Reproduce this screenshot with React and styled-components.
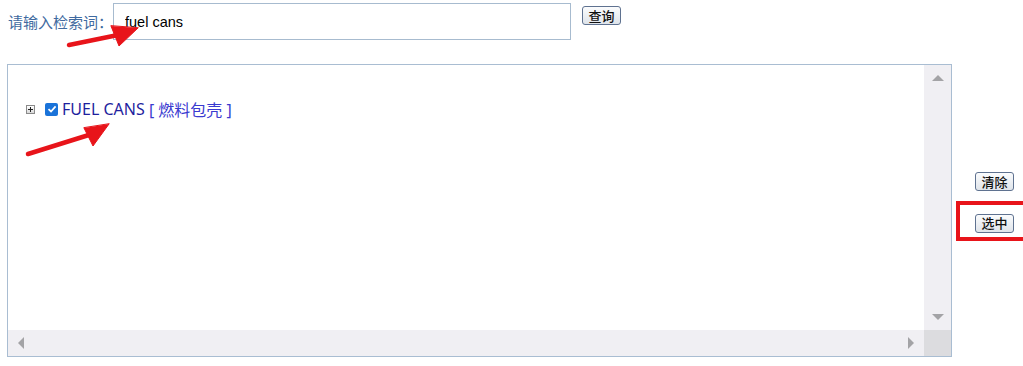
import React from "react";
import styled, { createGlobalStyle } from "styled-components";

const GlobalStyle = createGlobalStyle`
  html, body {
    margin: 0;
    padding: 0;
    background: #fff;
    overflow: hidden;
  }
  body {
    font-family: "Noto Sans", "Noto Sans CJK SC", sans-serif;
  }
`;

const Page = styled.div`
  position: relative;
  width: 1023px;
  height: 366px;
  padding-left: 7px;
  box-sizing: border-box;
  overflow: hidden;
`;

const SearchRow = styled.div`
  display: flex;
  align-items: flex-start;
  padding-top: 3px;
`;

const Label = styled.span`
  margin-left: 1px;
  width: 105px;
  flex-shrink: 0;
  line-height: 37px;
  font-size: 15px;
  color: #3f6aa0;
  font-family: "Noto Sans CJK SC", sans-serif;
  white-space: nowrap;
`;

const SearchInput = styled.input`
  box-sizing: border-box;
  width: 458px;
  height: 37px;
  border: 1px solid #a7bbcf;
  padding: 0 11px;
  font-size: 14.5px;
  font-family: "Liberation Sans", Arial, sans-serif;
  color: #000;
  outline: none;
`;

const SmallButton = styled.button`
  box-sizing: border-box;
  flex-shrink: 0;
  height: 19px;
  width: 39px;
  margin: ${(p) => p.$margin || "0"};
  padding: 0;
  border: 1px solid #5f7290;
  border-radius: 3px;
  background: linear-gradient(#fbfcfd, #dfe4ea);
  font-size: 13px;
  line-height: 16px;
  font-weight: 500;
  color: #111;
  font-family: "Noto Sans CJK SC", sans-serif;
`;

const MainRow = styled.div`
  display: flex;
  margin-top: 24px;
`;

const Panel = styled.div`
  box-sizing: border-box;
  flex-shrink: 0;
  width: 945px;
  height: 293px;
  border: 1px solid #a9bdd2;
  display: grid;
  grid-template-columns: 1fr 27px;
  grid-template-rows: 1fr 26px;
`;

const TreeArea = styled.div`
  padding: 34px 18px;
`;

const TreeRow = styled.div`
  display: flex;
  align-items: center;
  height: 20px;
`;

const Expander = styled.span`
  box-sizing: border-box;
  width: 9px;
  height: 9px;
  border: 1px solid #8a8a8a;
  background: linear-gradient(#fff, #d8d8d8);
  position: relative;
  margin-right: 10px;
  &::before,
  &::after {
    content: "";
    position: absolute;
    background: #222;
  }
  &::before {
    left: 1px;
    right: 1px;
    top: 3px;
    height: 1px;
  }
  &::after {
    top: 1px;
    bottom: 1px;
    left: 3px;
    width: 1px;
  }
`;

const Check = styled.span`
  box-sizing: border-box;
  width: 13px;
  height: 13px;
  border-radius: 2px;
  background: #1a73d9;
  display: inline-flex;
  align-items: center;
  justify-content: center;
  margin-right: 4px;
`;

const NodeName = styled.span`
  font-size: 16px;
  color: #1f1f9e;
  font-family: "Noto Sans", "Noto Sans CJK SC", sans-serif;
  white-space: pre;
`;

const NodeCode = styled.span`
  font-size: 16px;
  color: #3a3ad0;
  font-family: "Noto Sans", "Noto Sans CJK SC", sans-serif;
  white-space: pre;
`;

const ScrollTrack = styled.div`
  background: #f0eff3;
  display: flex;
  flex-direction: ${(p) => (p.$vertical ? "column" : "row")};
  justify-content: space-between;
  align-items: center;
  padding: ${(p) => (p.$vertical ? "10px 0" : "0 10px")};
`;

const Corner = styled.div`
  background: #dcdcdf;
`;

const Arrow = styled.span`
  width: 0;
  height: 0;
  border-style: solid;
  border-color: transparent;
  ${(p) =>
    p.$dir === "up" &&
    "border-width: 0 6px 6px 6px; border-bottom-color: #a3a3a6;"}
  ${(p) =>
    p.$dir === "down" &&
    "border-width: 6px 6px 0 6px; border-top-color: #a3a3a6;"}
  ${(p) =>
    p.$dir === "left" &&
    "border-width: 6px 6px 6px 0; border-right-color: #a3a3a6;"}
  ${(p) =>
    p.$dir === "right" &&
    "border-width: 6px 0 6px 6px; border-left-color: #a3a3a6;"}
`;

const SideColumn = styled.div`
  display: flex;
  flex-direction: column;
  align-items: flex-start;
  flex-shrink: 0;
  padding-top: 108px;
  margin-left: 4px;
`;

const Highlight = styled.div`
  margin-top: 10px;
  width: 72px;
  height: 40px;
  box-sizing: border-box;
  border: 4px solid #e8141a;
  padding: 6px 0 0 15px;
`;

const Overlay = styled.svg`
  position: absolute;
  left: 0;
  top: 0;
  pointer-events: none;
`;

function Marks() {
  return (
    <Overlay width="1023" height="366">
      <g fill="#e8141a" stroke="#e8141a" strokeLinecap="round">
        <line x1="69" y1="45" x2="118" y2="35" strokeWidth="4.5" />
        <polygon points="111,26 119,46 138,28" strokeWidth="1" />
        <line x1="28" y1="154" x2="92" y2="134" strokeWidth="4.5" />
        <polygon points="84,128 93,146 109,124" strokeWidth="1" />
      </g>
    </Overlay>
  );
}

export default function App() {
  return (
    <>
      <GlobalStyle />
      <Page>
        <SearchRow>
          <Label>请输入检索词：</Label>
          <SearchInput defaultValue="fuel cans" />
          <SmallButton $margin="3px 0 0 11px">查询</SmallButton>
        </SearchRow>
        <MainRow>
          <Panel>
            <TreeArea>
              <TreeRow>
                <Expander />
                <Check>
                  <svg width="10" height="10" viewBox="0 0 10 10">
                    <path
                      d="M1.5 5.2 L4 7.5 L8.6 2.4"
                      fill="none"
                      stroke="#fff"
                      strokeWidth="1.7"
                    />
                  </svg>
                </Check>
                <NodeName>FUEL CANS </NodeName>
                <NodeCode>[ 燃料包壳 ]</NodeCode>
              </TreeRow>
            </TreeArea>
            <ScrollTrack $vertical>
              <Arrow $dir="up" />
              <Arrow $dir="down" />
            </ScrollTrack>
            <ScrollTrack>
              <Arrow $dir="left" />
              <Arrow $dir="right" />
            </ScrollTrack>
            <Corner />
          </Panel>
          <SideColumn>
            <SmallButton $margin="0 0 0 19px">清除</SmallButton>
            <Highlight>
              <SmallButton>选中</SmallButton>
            </Highlight>
          </SideColumn>
        </MainRow>
        <Marks />
      </Page>
    </>
  );
}
